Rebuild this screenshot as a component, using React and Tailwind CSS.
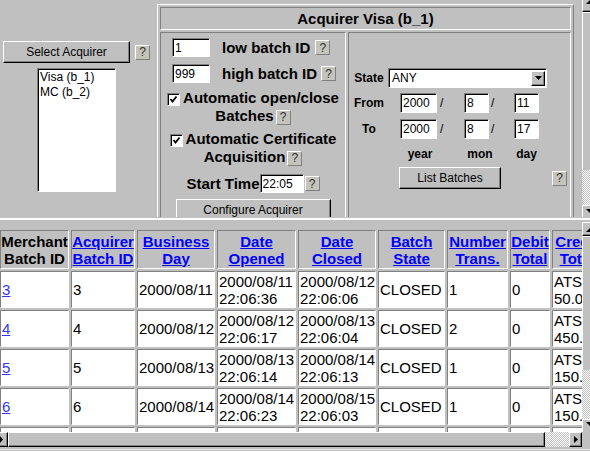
import React from 'react';

const raised = 'border border-t-white border-l-white border-r-black border-b-black shadow-[inset_-1px_-1px_0_#808080]';
const sunken = 'border border-t-[#808080] border-l-[#808080] border-r-white border-b-white shadow-[inset_1px_1px_0_#000]';
const inset = 'border border-t-[#808080] border-l-[#808080] border-r-white border-b-white';
const dither = 'bg-[repeating-conic-gradient(#ffffff_0%_25%,#c0c0c0_0%_50%)] bg-[length:2px_2px]';

function Help() {
  return (
    <span className="inline-flex w-[15px] h-[15px] items-center justify-center border border-t-white border-l-white border-r-[#808080] border-b-[#808080] bg-[#c4c4bc] text-[12px] leading-none font-normal text-[#303030] align-middle">
      ?
    </span>
  );
}

function Field({ value, w, h = 'h-[19px]' }) {
  return (
    <input
      readOnly
      value={value}
      className={`${sunken} ${w} ${h} bg-white px-[2px] text-[12px] font-normal text-black outline-none`}
    />
  );
}

function Check() {
  return (
    <span className={`${sunken} inline-flex w-[13px] h-[13px] bg-white items-center justify-center align-[-1px] mr-[3px]`}>
      <svg width="9" height="9" viewBox="0 0 9 9">
        <polyline points="1.5,4 3.5,6.5 7.5,1.5" fill="none" stroke="#000" strokeWidth="1.8" />
      </svg>
    </span>
  );
}

function Btn({ w, children }) {
  return (
    <button className={`${raised} ${w} h-[22px] bg-[#c0c0c0] text-[12px] leading-none font-normal text-black`}>
      {children}
    </button>
  );
}

function LeftCell() {
  return (
    <div className={`${inset} w-[186px] h-[250px] shrink-0 flex flex-col text-[15px] font-bold leading-[18px]`}>
      <div className="mt-[5px] flex items-center pl-[11px]">
        <Field value="1" w="w-[38px]" />
        <span className="ml-[12px]">low batch ID</span>
        <span className="ml-[5px] flex"><Help /></span>
      </div>
      <div className="mt-[7px] flex items-center pl-[11px]">
        <Field value="999" w="w-[38px]" />
        <span className="ml-[12px]">high batch ID</span>
        <span className="ml-[4px] flex"><Help /></span>
      </div>
      <div className="mt-[6px] px-[2px] text-center">
        <Check />Automatic open/close Batches<span className="ml-[2px]"><Help /></span>
      </div>
      <div className="mt-[5px] px-[2px] text-center">
        <Check />Automatic Certificate Acquisition<span className="ml-[2px]"><Help /></span>
      </div>
      <div className="mt-[8px] flex items-center justify-center">
        <span>Start Time</span>
        <Field value="22:05" w="w-[44px]" />
        <span className="ml-[1px] flex"><Help /></span>
      </div>
      <div className="mt-[6px] flex justify-center">
        <Btn w="w-[155px]">Configure Acquirer</Btn>
      </div>
    </div>
  );
}

function RightCell() {
  return (
    <div className={`${inset} w-[223px] h-[250px] shrink-0 flex flex-col pl-[3px] text-[12px] font-bold leading-[14px]`}>
      <div className="mt-[35px] flex items-center">
        <span className="w-[34px] text-center">State</span>
        <div className={`${sunken} ml-[2px] w-[159px] h-[20px] bg-white flex items-center font-normal`}>
          <span className="flex-1 pl-[3px]">ANY</span>
          <span className={`${raised} w-[14px] h-[15px] mr-[1px] bg-[#c0c0c0] flex items-center justify-center`}>
            <svg width="7" height="4" viewBox="0 0 7 4"><polygon points="0,0 7,0 3.5,4" fill="#000" /></svg>
          </span>
        </div>
      </div>
      <div className="mt-[5px] flex items-center">
        <span className="w-[34px] text-center">From</span>
        <div className="ml-[14px] w-[64px] flex items-center">
          <Field value="2000" w="w-[37px]" h="h-[20px]" />
          <span className="ml-[3px] font-normal">/</span>
        </div>
        <div className="w-[50px] flex items-center">
          <Field value="8" w="w-[25px]" h="h-[20px]" />
          <span className="ml-[2px] font-normal">/</span>
        </div>
        <Field value="11" w="w-[25px]" h="h-[20px]" />
      </div>
      <div className="mt-[6px] flex items-center">
        <span className="w-[34px] text-center">To</span>
        <div className="ml-[14px] w-[64px] flex items-center">
          <Field value="2000" w="w-[37px]" h="h-[20px]" />
          <span className="ml-[3px] font-normal">/</span>
        </div>
        <div className="w-[50px] flex items-center">
          <Field value="8" w="w-[25px]" h="h-[20px]" />
          <span className="ml-[2px] font-normal">/</span>
        </div>
        <Field value="17" w="w-[25px]" h="h-[20px]" />
      </div>
      <div className="mt-[8px] flex">
        <span className="ml-[48px] w-[40px] text-center">year</span>
        <span className="ml-[24px] w-[32px] text-center">mon</span>
        <span className="ml-[18px] w-[25px] text-center">day</span>
      </div>
      <div className="mt-[6px] flex items-center">
        <span className="ml-[47px] flex"><Btn w="w-[102px]">List Batches</Btn></span>
        <span className="ml-[51px] flex"><Help /></span>
      </div>
    </div>
  );
}

function TopScroll() {
  return (
    <div className="w-[8px] h-full shrink-0 flex flex-col overflow-hidden">
      <div className="h-[12px] bg-[#c0c0c0] border-l border-l-white border-b border-b-black shadow-[inset_0_-1px_0_#808080]">
        <svg width="7" height="5" viewBox="0 0 7 5" className="block"><polygon points="3,4 7,0 7,4" fill="#000" /></svg>
      </div>
      <div className="h-[158px] bg-[#c0c0c0] border-l border-t border-white" />
      <div className={`h-[35px] ${dither}`} />
      <div className="h-[12px] bg-[#c0c0c0] border-l border-t border-white pt-[3px]">
        <svg width="7" height="5" viewBox="0 0 7 5" className="block"><polygon points="3,0 7,0 7,4" fill="#000" /></svg>
      </div>
    </div>
  );
}

function TopFrame() {
  return (
    <div className="h-[217px] flex">
      <div className="w-[582px] h-full overflow-hidden flex items-start">
        <div className="w-[153px] shrink-0 flex flex-col items-center pt-[41px]">
          <div className="flex items-center gap-[5px]">
            <Btn w="w-[127px]">Select Acquirer</Btn>
            <Help />
          </div>
          <div className={`${sunken} mt-[5px] w-[79px] h-[124px] bg-white text-[12px] leading-[15px] pl-[2px] pt-[1px]`}>
            <div>Visa (b_1)</div>
            <div>MC (b_2)</div>
          </div>
        </div>
        <div className="ml-[4px] mt-[4px] w-[417px] shrink-0 border border-t-white border-l-white border-r-[#808080] border-b-[#808080] p-[2px] flex flex-col gap-[2px]">
          <div className={`${inset} h-[23px] flex items-center justify-center text-[15px] font-bold leading-[17px]`}>
            Acquirer Visa (b_1)
          </div>
          <div className="flex gap-[2px]">
            <LeftCell />
            <RightCell />
          </div>
        </div>
      </div>
      <TopScroll />
    </div>
  );
}

const heads = [
  { w: 'w-[69px]', t: ['Merchant', 'Batch ID'], link: false },
  { w: 'w-[64px]', t: ['Acquirer', 'Batch ID'], link: true },
  { w: 'w-[78px]', t: ['Business', 'Day'], link: true },
  { w: 'w-[79px]', t: ['Date', 'Opened'], link: true },
  { w: 'w-[78px]', t: ['Date', 'Closed'], link: true },
  { w: 'w-[67px]', t: ['Batch', 'State'], link: true },
  { w: 'w-[61px]', t: ['Number', 'Trans.'], link: true },
  { w: 'w-[40px]', t: ['Debit', 'Total'], link: true },
  { w: 'w-[50px]', t: ['Credit', 'Total'], link: true },
];

const rows = [
  ['3', '2000/08/11', '2000/08/11 22:06:36', '2000/08/12 22:06:06', '1', 'ATS 50.00'],
  ['4', '2000/08/12', '2000/08/12 22:06:17', '2000/08/13 22:06:04', '2', 'ATS 450.00'],
  ['5', '2000/08/13', '2000/08/13 22:06:14', '2000/08/14 22:06:13', '1', 'ATS 150.00'],
  ['6', '2000/08/14', '2000/08/14 22:06:23', '2000/08/15 22:06:03', '1', 'ATS 150.00'],
  ['7', '2000/08/15', '2000/08/15 22:06:11', '2000/08/16 22:06:08', '1', 'ATS 150.00'],
];

function Two({ s }) {
  const [a, b] = s.split(' ');
  return (
    <>
      {a}
      <br />
      {b}
    </>
  );
}

function BatchTable() {
  const td = `${inset} bg-white h-[37px] px-[1px] py-0 text-left align-middle font-normal`;
  return (
    <table className="ml-[-2px] border-separate border-spacing-[2px] table-fixed w-[606px] text-[15px] leading-[17px]">
      <thead>
        <tr>
          {heads.map((h, i) => (
            <th key={i} className={`${inset} ${h.w} h-[39px] p-0 bg-[#c0c0c0] font-bold text-center align-middle whitespace-nowrap overflow-hidden`}>
              {h.link ? (
                <a href="#" className="text-[#0000ff] underline">
                  {h.t[0]}
                  <br />
                  {h.t[1]}
                </a>
              ) : (
                <>
                  {h.t[0]}
                  <br />
                  {h.t[1]}
                </>
              )}
            </th>
          ))}
        </tr>
      </thead>
      <tbody>
        {rows.map((r) => (
          <tr key={r[0]}>
            <td className={td}>
              <a href="#" className="text-[#3333ff] underline">{r[0]}</a>
            </td>
            <td className={td}>{r[0]}</td>
            <td className={td}>{r[1]}</td>
            <td className={td}><Two s={r[2]} /></td>
            <td className={td}><Two s={r[3]} /></td>
            <td className={td}>CLOSED</td>
            <td className={td}>{r[4]}</td>
            <td className={td}>0</td>
            <td className={`${td} whitespace-nowrap overflow-hidden`}><Two s={r[5]} /></td>
          </tr>
        ))}
      </tbody>
    </table>
  );
}

function BottomFrame() {
  return (
    <div className="h-[229px] flex flex-col">
      <div className="h-[210px] flex">
        <div className="w-[582px] h-full overflow-hidden pt-[6px]">
          <BatchTable />
        </div>
        <div className="w-[8px] h-full shrink-0 flex flex-col overflow-hidden">
          <div className="h-[14px] bg-[#c0c0c0] border-l border-t border-white border-b border-b-black shadow-[inset_0_-1px_0_#808080] pt-[5px]">
            <svg width="7" height="5" viewBox="0 0 7 5" className="block"><polygon points="3,4 7,0 7,4" fill="#000" /></svg>
          </div>
          <div className="h-[134px] bg-[#c0c0c0] border-l border-t border-white" />
          <div className={`h-[49px] ${dither}`} />
          <div className="h-[13px] bg-[#c0c0c0] border-l border-t border-white pt-[2px]">
            <svg width="7" height="5" viewBox="0 0 7 5" className="block"><polygon points="3,0 7,0 7,4" fill="#000" /></svg>
          </div>
        </div>
      </div>
      <div className="h-[15px] flex">
        <div className="w-[8px] bg-[#c0c0c0] border-t border-t-white border-b border-b-black border-r border-r-black shadow-[inset_-1px_-1px_0_#808080] flex items-center">
          <svg width="3" height="7" viewBox="0 0 3 7" className="block"><polygon points="0,0 3,3.5 0,7" fill="#000" /></svg>
        </div>
        <div className={`flex-1 bg-[#c0c0c0] ${raised}`} />
        <div className={`w-[24px] ${dither}`} />
        <div className={`w-[13px] bg-[#c0c0c0] ${raised} flex items-center justify-center`}>
          <svg width="4" height="7" viewBox="0 0 4 7" className="block"><polygon points="0,0 4,3.5 0,7" fill="#000" /></svg>
        </div>
        <div className="w-[8px] bg-[#c0c0c0]" />
      </div>
      <div className="h-[2px] bg-[#c0c0c0]" />
      <div className="h-[1px] bg-[#e8e8e8]" />
      <div className="flex-1 bg-[#c0c0c0]" />
    </div>
  );
}

export default function App() {
  return (
    <div className="w-[590px] h-[451px] overflow-hidden bg-[#c0c0c0] font-['Liberation_Sans',Arial,sans-serif] text-black">
      <TopFrame />
      <div className="h-[5px] flex flex-col">
        <div className="h-[1px] bg-[#c0c0c0]" />
        <div className="h-[2px] bg-white" />
        <div className="flex-1 bg-[#c0c0c0]" />
      </div>
      <BottomFrame />
    </div>
  );
}
